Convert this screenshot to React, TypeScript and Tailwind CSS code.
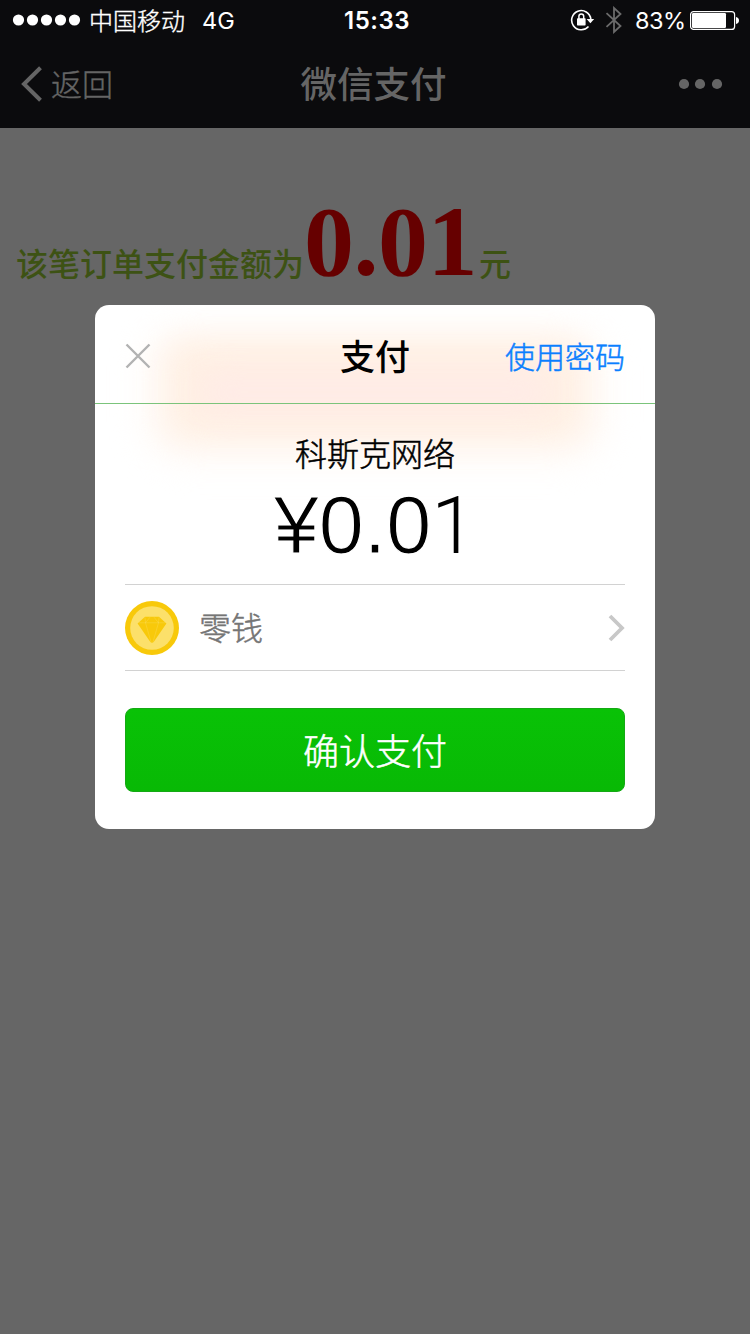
import type { ReactNode } from "react";

function StatusBar() {
  return (
    <div className="flex h-10 items-center text-white">
      <div className="flex w-[344px] items-center pl-3">
        <svg width="70" height="12" viewBox="0 0 70 12" fill="currentColor">
          {[6.5, 20.5, 34.5, 48.5, 62.5].map((x) => (
            <circle key={x} cx={x} cy="6" r="5.6" />
          ))}
        </svg>
        <span className="ml-[7px] text-[24px] leading-10 font-light [-webkit-text-stroke:0.4px_currentColor]">中国移动</span>
        <span className="ml-[17px] pt-[2px] font-[Inter,sans-serif] text-[23.5px] leading-10">4G</span>
      </div>
      <span className="w-[226px] pt-[2px] font-[Inter,sans-serif] text-[24px] leading-10 font-semibold tracking-[0.5px]">15:33</span>
      <svg width="26" height="24" viewBox="0 0 26 24" fill="none" stroke="currentColor">
        <path d="M18.5 18.5 A9.6 9.6 0 1 1 20.8 11" strokeWidth="1.6" />
        <path d="M16.6 11 H24.2 L20.4 15.2 Z" fill="currentColor" stroke="none" />
        <rect x="7" y="10.2" width="8.6" height="7.2" rx=".7" fill="currentColor" stroke="none" />
        <path d="M8.9 11 V8.3 a2.4 2.4 0 0 1 4.8 0 V11" strokeWidth="1.5" />
      </svg>
      <svg className="ml-[9px]" width="18" height="28" viewBox="0 0 18 28" fill="none" stroke="#6b6b6b" strokeWidth="1.8">
        <path d="M1.5 7.2 L15.5 20 L9 26 V2 L15.5 8 L1.5 20.8" />
      </svg>
      <span className="ml-[12px] w-[55px] pt-[2px] font-[Inter,sans-serif] text-[23.5px] leading-10 tracking-[-0.5px]">83%</span>
      <svg width="50" height="20" viewBox="0 0 50 20">
        <rect x=".6" y="1.6" width="44" height="17.8" rx="3" fill="none" stroke="white" strokeWidth="1.2" />
        <rect x="2" y="3" width="34" height="15" rx="1.2" fill="white" />
        <path d="M46 7 q3 .8 3 3.5 t-3 3.5 z" fill="white" />
      </svg>
    </div>
  );
}

function NavBar() {
  return (
    <div className="grid h-22 grid-cols-[1fr_auto_1fr] items-center px-[21px] text-[#656565]">
      <button className="flex items-center gap-[9px]">
        <svg width="21" height="36" viewBox="0 0 21 36" fill="none" stroke="currentColor" strokeWidth="4">
          <path d="M19.5 1.8 L3 18 L19.5 34.2" />
        </svg>
        <span className="pb-[2px] text-[31px] leading-[86px] font-light [-webkit-text-stroke:0.4px_currentColor]">返回</span>
      </button>
      <h1 className="mr-[3px] pb-[2px] text-[36.5px] leading-[86px] font-medium">微信支付</h1>
      <svg className="mr-[6px] justify-self-end" width="46" height="12" viewBox="0 0 46 12" fill="currentColor">
        <circle cx="7" cy="6" r="5.1" />
        <circle cx="23" cy="6" r="5.1" />
        <circle cx="40" cy="6" r="5.1" />
      </svg>
    </div>
  );
}

function OrderAmount() {
  return (
    <p className="flex h-[177px] items-baseline pt-[56px] pl-4 text-[32px] text-[#3d5214]">
      <span className="translate-y-px font-medium">该笔订单支付金额为</span>
      <span className="w-[175px] font-['Liberation_Serif',serif] text-[100px] leading-[115px] font-bold tracking-[-0.5px] text-[#660000]">
        0.01
      </span>
      <span className="translate-y-px font-medium">元</span>
    </p>
  );
}

function Coin() {
  return (
    <svg width="54" height="54" viewBox="0 0 54 54">
      <circle cx="27" cy="27" r="27" fill="#f8c90a" />
      <circle cx="27" cy="27" r="21.8" fill="#fce06a" />
      <path d="M20 15.8 H34 L41.4 22.5 L28.7 41 Q27 42.6 25.3 41 L12.6 22.5 Z" fill="#f8c90a" />
      <path
        d="M14 21.8 H40 M20 16.5 L20.5 21.8 L26 41 M28 41 L33.5 21.8 L34 16.5 M20.5 21.8 L25 16.2 M33.5 21.8 L29 16.2"
        fill="none"
        stroke="#fce06a"
        strokeOpacity=".45"
        strokeWidth=".7"
      />
    </svg>
  );
}

function Dialog({ children }: { children: ReactNode }) {
  return (
    <section className="relative isolate mx-auto h-[524px] w-[560px] overflow-hidden rounded-[14px] bg-white text-black">
      <div className="absolute top-[22px] left-[50px] -z-10 h-[134px] w-[460px] rounded-[40px] bg-[#fff9f4] blur-[16px]" />
      <div className="absolute top-[36px] left-[72px] -z-10 h-[98px] w-[416px] rounded-[24px] bg-[#fff0e4] blur-[14px]" />
      <div className="absolute top-[66px] left-[105px] -z-10 h-[42px] w-[350px] rounded-[24px] bg-[#ffebe6] blur-[14px]" />
      {children}
    </section>
  );
}

export default function App() {
  return (
    <main className="h-[1334px] w-[750px] overflow-hidden bg-[#666666] font-['Noto_Sans_CJK_SC',sans-serif]">
      <header className="bg-[#0b0b0d]">
        <StatusBar />
        <NavBar />
      </header>
      <OrderAmount />
      <Dialog>
        <div className="grid h-[99px] grid-cols-[1fr_auto_1fr] items-center border-b border-[#7bc47b] px-[30px] pt-1">
          <svg width="26" height="26" viewBox="0 0 26 26" stroke="#b2b2b2" strokeWidth="2.4">
            <path d="M1.5 1.5 L24.5 24.5 M24.5 1.5 L1.5 24.5" />
          </svg>
          <h2 className="pb-[2px] text-[35px] leading-[48px] font-medium">支付</h2>
          <button className="justify-self-end pb-[3px] text-[30px] leading-[48px] font-light text-[#0b7fff] [-webkit-text-stroke:0.5px_currentColor]">使用密码</button>
        </div>
        <div className="px-[30px]">
          <p className="pt-[24px] text-center text-[32px] leading-[48px] font-light [-webkit-text-stroke:0.5px_currentColor]">科斯克网络</p>
          <p className="flex h-[108px] items-baseline justify-center pt-[2px] font-['Liberation_Sans',sans-serif] text-[81px] leading-[94px] [-webkit-text-stroke:1.2px_white]">
            <span>¥0.0</span>
            <span className="w-[45px] font-[Roboto,sans-serif] text-[80px] font-light [-webkit-text-stroke:0px]">1</span>
          </p>
          <div className="flex h-[87px] items-center border-y border-[#d2d2d2]">
            <Coin />
            <span className="ml-5 pb-[4px] text-[32px] leading-[48px] font-light text-[#757575] [-webkit-text-stroke:0.5px_currentColor]">零钱</span>
            <svg className="ml-auto" width="17" height="28" viewBox="0 0 17 28" fill="none" stroke="#c8c8c8" strokeWidth="3.8">
              <path d="M2 2 L14 14 L2 26" />
            </svg>
          </div>
          <button className="mt-[37px] h-[84px] w-full rounded-[8px] border border-[#15a915] bg-linear-to-b from-[#09c206] to-[#08b905] pb-[2px] text-[36px] leading-[80px] font-light text-white [-webkit-text-stroke:0.5px_currentColor]">
            确认支付
          </button>
        </div>
      </Dialog>
    </main>
  );
}
